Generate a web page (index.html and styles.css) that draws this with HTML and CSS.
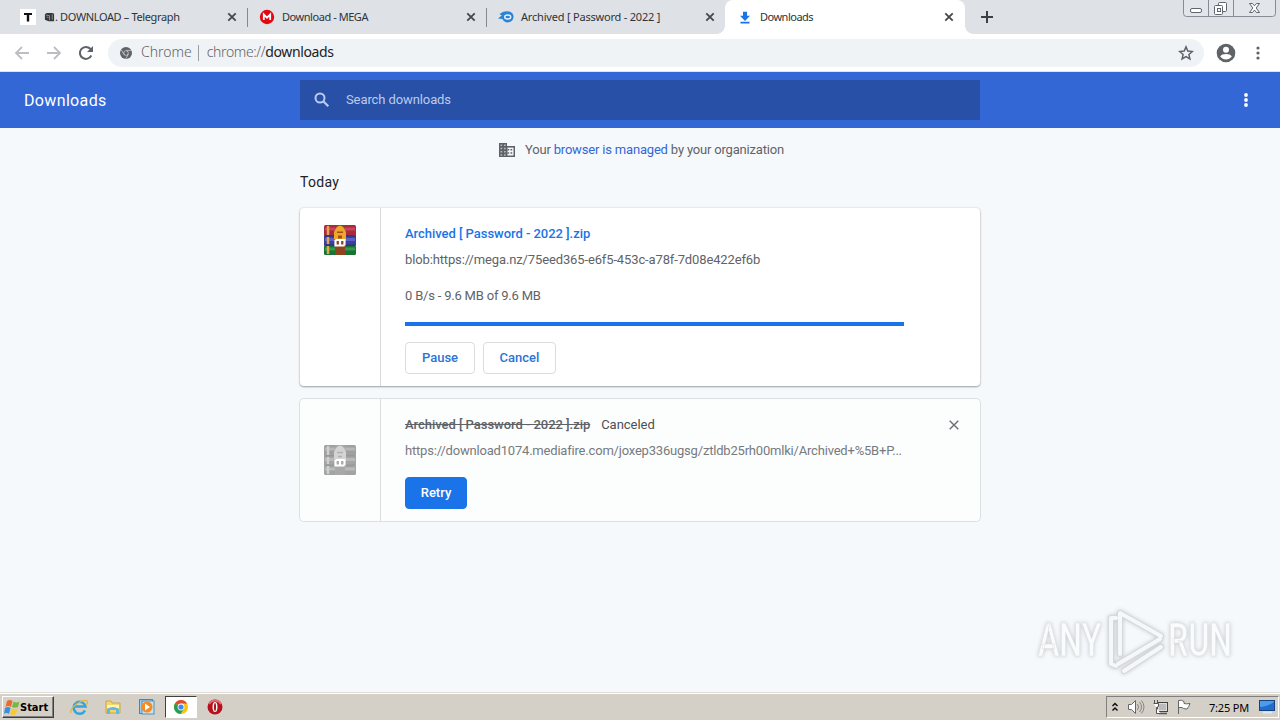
FILE: index.html
```html
<!DOCTYPE html>
<html lang="en">
<head>
    <meta charset="UTF-8">
    <title>Downloads</title>
    <link rel="stylesheet" href="styles.css">
</head>
<body>

    <div class="tabs">
        <div class="tab">
            <svg class="favicon" viewBox="0 0 16 16"><rect width="16" height="16" fill="#fff"/><path d="M4 4h8v2H9.200v6.500H6.800V6H4z" fill="#111"/></svg>
            <svg class="book" viewBox="0 0 12 10"><path d="M1 2l2-1.500h6l2 1V9.500H5L1 8z" fill="#33363a"/><path d="M2 3l4 .5v5M3 5l2 .500M9 2v6" fill="none" stroke="#aaa" stroke-width=".8"/></svg>
            <span class="tab-title t1">. DOWNLOAD – Telegraph</span>
            <svg class="close" viewBox="0 0 10 10"><path d="M1.300 1.300l7.400 7.400M8.700 1.300l-7.400 7.400"/></svg>
        </div>
        <div class="tab line">
            <svg class="favicon" viewBox="0 0 16 16"><circle cx="8" cy="8" r="7.200" fill="#e30613"/><path d="M4.800 11V5.500L8 8.700l3.200-3.200V11" fill="none" stroke="#fff" stroke-width="1.800"/></svg>
            <span class="tab-title t2">Download - MEGA</span>
            <svg class="close" viewBox="0 0 10 10"><path d="M1.300 1.300l7.400 7.400M8.700 1.300l-7.400 7.400"/></svg>
        </div>
        <div class="tab line">
            <svg class="favicon" viewBox="0 0 16 16"><path d="M0 9.500C2 8 2.500 7 4 6.500L1.500 5.300C5 1.500 11 1.300 14 4c3 3 1.500 8.500-3 9.300-3 .5-5.500-.8-6.500-3.300z" fill="#2b83d6"/><ellipse cx="9.700" cy="8" rx="3" ry="2" fill="none" stroke="#e8f3ff" stroke-width="1.400"/></svg>
            <span class="tab-title t3">Archived [ Password - 2022 ]</span>
            <svg class="close" viewBox="0 0 10 10"><path d="M1.300 1.300l7.400 7.400M8.700 1.300l-7.400 7.400"/></svg>
        </div>
        <div class="tab active">
            <svg class="favicon" viewBox="0 0 16 16"><path d="M6 2.800h4v4h3L8 12 3 6.800h3zM3.500 12.800h9v1.600h-9z" fill="#1a73e8"/></svg>
            <span class="tab-title t4">Downloads</span>
            <svg class="close" viewBox="0 0 10 10"><path d="M1.300 1.300l7.400 7.400M8.700 1.300l-7.400 7.400"/></svg>
        </div>
        <svg class="new-tab" viewBox="0 0 14 14"><path d="M7 1v12M1 7h12" stroke="#3c4043" stroke-width="2"/></svg>
        <svg class="window-buttons" viewBox="0 0 94 17">
            <path d="M.5 0v13.500q0 3 3 3h86q3 0 3-3V0M25.500 0v16.500M50.500 0v16.500" fill="#e2e5ea" stroke="#868b96"/>
            <g fill="#fff" stroke="#5f646d">
                <rect x="7.500" y="8.500" width="11" height="4" rx="1.500"/>
                <rect x="35.500" y="2.500" width="8" height="9" rx="1"/>
                <rect x="31.500" y="5.500" width="8" height="9" rx="1"/>
                <rect x="34.500" y="8.500" width="3" height="3"/>
                <path d="M66.500 3.500h3l2 2.300 2-2.300h3L73.200 8l3.300 4.500h-3l-2-2.400-2 2.400h-3L69.800 8z"/>
            </g>
        </svg>
    </div>

    <div class="toolbar">
        <svg class="nav" viewBox="0 0 16 16"><path d="M15 8H2M8 2L2 8l6 6" stroke="#bcbec1"/></svg>
        <svg class="nav" viewBox="0 0 16 16"><path d="M1 8h13M8 2l6 6-6 6" stroke="#bcbec1"/></svg>
        <svg class="nav" viewBox="0 0 16 16"><path d="M13.300 10.500A6 6 0 1 1 12.300 3.800L14 5.500" stroke="#5f6368" stroke-width="2"/><path d="M15 1v6H9z" fill="#5f6368"/></svg>
        <div class="address">
            <svg class="chrome-mark" viewBox="0 0 12 12"><circle cx="6" cy="6" r="6" fill="#5f6368"/><path d="M6 3.400h5.400M3.800 7.300L1.200 2.700M8.300 7.300l-2.700 4.600" stroke="#f1f3f4" stroke-width=".6"/><circle cx="6" cy="6" r="2.600" fill="#d4d6d8"/><circle cx="6" cy="6" r="1.900" fill="#5f6368"/></svg>
            <span class="scheme">Chrome</span>
            <span class="bar"></span>
            <span class="url">chrome://<b>downloads</b></span>
            <svg class="star" viewBox="0 0 16 16"><path d="M8 1.900l1.800 4.200 4.500.4-3.400 3 1 4.400L8 11.600l-3.900 2.300 1-4.400-3.400-3 4.500-.4z" fill="none" stroke="#5f6368" stroke-width="1.500"/></svg>
        </div>
        <svg class="profile" viewBox="0 0 20 20"><circle cx="10" cy="10" r="9.300" fill="#5f6368"/><circle cx="10" cy="6.800" r="3" fill="#fff"/><path d="M4.200 13.500c1.300-3.300 10.300-3.300 11.600 0-3 4-8.600 4-11.600 0z" fill="#fff"/></svg>
        <svg class="dots" viewBox="0 0 4 16"><g fill="#5f6368"><circle cx="2" cy="3" r="1.600"/><circle cx="2" cy="8" r="1.600"/><circle cx="2" cy="13" r="1.600"/></g></svg>
    </div>

    <div class="header">
        <h1>Downloads</h1>
        <div class="search">
            <svg viewBox="0 0 16 16"><circle cx="6" cy="6" r="4.500" fill="none" stroke="#bccbed" stroke-width="2"/><path d="M9.300 9.300l5 5" stroke="#bccbed" stroke-width="2.200"/></svg>
            <span>Search downloads</span>
        </div>
        <svg class="dots" viewBox="0 0 4 16"><g fill="#fff"><circle cx="2" cy="3" r="1.900"/><circle cx="2" cy="8" r="1.900"/><circle cx="2" cy="13" r="1.900"/></g></svg>
    </div>

    <div class="main">
        <div class="managed">
            <svg viewBox="0 0 18 16"><path d="M1 1h8v3h8v11H1z" fill="#5f6368"/><path d="M2.500 2.500h1.700v1.500H2.500zM6 2.500h1.700v1.500H6zM2.500 5.800h1.700v1.500H2.500zM6 5.800h1.700v1.500H6zM2.500 9h1.700v1.500H2.500zM6 9h1.700v1.500H6zM2.500 12.200h1.700v1.500H2.500zM6 12.200h1.700v1.500H6z" fill="#b5b9bd"/><path d="M9.500 5.600h6v7.900h-6z" fill="#f6f9fc"/><path d="M9.500 7h1.700v1.500H9.500zM9.500 10.300h1.700v1.500H9.500zM12.500 7h1.700v1.500h-1.700zM12.500 10.300h1.700v1.500h-1.700z" fill="#5f6368"/></svg>
            <span>Your <a>browser is managed</a> by your organization</span>
        </div>
        <h2>Today</h2>

        <div class="card">
            <div class="file-icon">
                <svg viewBox="0 0 32 30">
                    <rect width="32" height="11" rx="1.500" fill="#a82a3f"/><path d="M1 4h30" stroke="#cf4257" stroke-width="3"/>
                    <rect y="11" width="32" height="9" fill="#3a40a2"/><path d="M1 14.500h30" stroke="#5a62c4" stroke-width="3"/>
                    <rect y="20" width="32" height="10" rx="1.500" fill="#1a7234"/><path d="M1 24h30" stroke="#35994b" stroke-width="3"/>
                    <path d="M0 10.800h32M0 20.200h32" stroke="#3b2338" stroke-width=".8"/>
                    <path d="M4 1v9M4 12v7M4 21v8" stroke="#e0a850" stroke-width="2.500"/>
                    <path d="M11 0h10v30H11z" fill="#8f4421"/>
                    <path d="M12 3q4-5 8 0l2 4v7q-6 4-12 0V7z" fill="#eda72c"/><path d="M13 6.500h6v1.500h-6zM14 10.500h4v3h-4z" fill="#a64b18"/>
                    <path d="M11.500 15h9v5.500M11.500 15v5.500h9M16 15v5" fill="none" stroke="#fff" stroke-width="2.200"/>
                </svg>
            </div>
            <div class="details">
                <div class="name link">Archived [ Password - 2022 ].zip</div>
                <div class="source blob">blob:https://mega.nz/75eed365-e6f5-453c-a78f-7d08e422ef6b</div>
                <div class="status">0 B/s - 9.6 MB of 9.6 MB</div>
                <div class="progress"></div>
                <div class="buttons">
                    <span class="button pause">Pause</span>
                    <span class="button cancel">Cancel</span>
                </div>
            </div>
        </div>

        <div class="card canceled">
            <div class="file-icon">
                <svg viewBox="0 0 32 30">
                    <rect width="32" height="11" rx="1.500" fill="#a0a0a0"/><path d="M1 4h30" stroke="#b7b7b7" stroke-width="3"/>
                    <rect y="11" width="32" height="9" fill="#a5a5a5"/><path d="M1 14.500h30" stroke="#b9b9b9" stroke-width="3"/>
                    <rect y="20" width="32" height="10" rx="1.500" fill="#a3a3a3"/><path d="M1 24h30" stroke="#bababa" stroke-width="3"/>
                    <path d="M0 10.800h32M0 20.200h32" stroke="#919191" stroke-width=".8"/>
                    <path d="M4 1v9M4 12v7M4 21v8" stroke="#cfcfcf" stroke-width="2.500"/>
                    <path d="M11 0h10v30H11z" fill="#a8a8a8"/>
                    <path d="M12 3q4-5 8 0l2 4v7q-6 4-12 0V7z" fill="#d4d4d4"/><path d="M13 7.500h6M14 11.500h4" stroke="#b0b0b0" stroke-width="1.500"/>
                    <path d="M11.500 15h9v5.500M11.500 15v5.500h9M16 15v5" fill="none" stroke="#fff" stroke-width="2.200"/>
                </svg>
            </div>
            <div class="details">
                <div class="name"><s>Archived [ Password - 2022 ].zip</s><span class="tag">Canceled</span></div>
                <div class="source media">https://download1074.mediafire.com/joxep336ugsg/ztldb25rh00mlki/Archived+%5B+P...</div>
                <div class="buttons">
                    <span class="button retry">Retry</span>
                </div>
            </div>
            <svg class="remove" viewBox="0 0 10 10"><path d="M.7.7l8.600 8.600M9.300.7L.7 9.300" stroke="#6b6e72" stroke-width="1.400"/></svg>
        </div>
    </div>

    <svg class="watermark" viewBox="0 0 200 70">
        <g fill="#fafbfc" stroke="#dfe1e3" stroke-width=".6">
            <text transform="translate(2 50) scale(.7 1)">ANY</text>
            <text transform="translate(132 50) scale(.7 1)">RUN</text>
        </g>
        <g fill="none" stroke-linejoin="round" stroke-linecap="round">
            <path d="M80 12h-5v46l5 2M84 48V7l41 23M82 58l42-25M88 65l37-24" stroke="#d5d8db" stroke-width="6"/>
            <path d="M80 12h-5v46l5 2M84 48V7l41 23M82 58l42-25M88 65l37-24" stroke="#f6f7f8" stroke-width="4"/>
        </g>
    </svg>

    <div class="taskbar">
        <div class="start">
            <svg viewBox="0 0 16 16"><path d="M3 2q3-2 5.500 0L7 8Q4 6 1.500 8z" fill="#ed6a2d"/><path d="M9.500 2.500q3 2 6 0L14 8Q10.500 9.500 8 8z" fill="#75b843"/><path d="M1 9q3-2 5.500 0L5 15q-3-2-5 0z" fill="#3c8fdb"/><path d="M7.500 9.500q3 1.500 6 0L12 15q-3 2-6 0z" fill="#f9c932"/></svg>
            <span>Start</span>
        </div>
        <div class="launch">
            <svg viewBox="0 0 18 18"><path d="M15 12.500A6 6 0 1 1 15.500 8.500H5" fill="none" stroke="#32a5df" stroke-width="2.600"/><path d="M1 15C-1 10 13 0 17 3c1 1 0 3-1 4" fill="none" stroke="#e3b63e" stroke-width="1.300"/></svg>
            <svg viewBox="0 0 18 18"><path d="M2 3h5l1 2h8v10H2z" fill="#f5d66e" stroke="#cda543"/><path d="M3 7h12v3H3z" fill="#fff5b8"/><path d="M3 16V11q6-4 12 0v5h-3v-4H6v4z" fill="#5ebae0"/></svg>
            <svg viewBox="0 0 18 18"><rect x="1.500" y="1.500" width="13" height="14" fill="#9cccf0" stroke="#4289b9"/><rect x="4" y="3" width="12" height="13" fill="#c8e3f6" stroke="#528fb5"/><circle cx="9" cy="9" r="5.500" fill="#f68b1f"/><path d="M7 5.500l5 3.500-5 3.500z" fill="#fff"/></svg>
            <div class="running"><svg viewBox="0 0 18 18"><circle cx="9" cy="9" r="7" fill="#fbc116"/><path d="M9 9L2.900 5.500A7 7 0 0 1 15.100 5.500H9z" fill="#df4935"/><path d="M2.900 5.500A7 7 0 0 0 8.500 16L12 10.700 9 9z" fill="#249d57"/><circle cx="9" cy="9" r="3.400" fill="#fff"/><circle cx="9" cy="9" r="2.600" fill="#4285f4"/></svg></div>
            <svg viewBox="0 0 18 18"><circle cx="9" cy="9" r="7.500" fill="#b80f1c"/><path d="M3 6a7 7 0 0 1 12 0" fill="none" stroke="#e36b6f" stroke-width="2"/><ellipse cx="9" cy="9" rx="2.500" ry="5" fill="#f8f8f8"/><ellipse cx="9" cy="9" rx="1" ry="4" fill="#a5101a"/></svg>
        </div>
        <div class="tray">
            <svg class="chevrons" viewBox="0 0 8 10"><path d="M1.500 4L4 1.500 6.500 4M1.500 8.500L4 6l2.500 2.500" fill="none" stroke="#111" stroke-width="1.500"/></svg>
            <svg class="sound" viewBox="0 0 18 16"><path d="M1.500 5.500h3l4-4v13l-4-4h-3z" fill="#fff" stroke="#67676a"/><path d="M10.500 5q2 3 0 6M12.500 3q4 5 0 10M14.500 1.500q5 6.500 0 13" fill="none" stroke="#858585"/></svg>
            <svg class="network" viewBox="0 0 18 16"><rect x="5.500" y="3.500" width="10" height="9" fill="#ddd" stroke="#444"/><rect x="7" y="5" width="7" height="6" fill="#bbb"/><path d="M7 14.500h8" stroke="#555" stroke-width="1.500"/><path d="M2.500 1v3M5.500 1v3M1.500 4.500h5v3l-2 1v6h4" fill="#fff" stroke="#555"/></svg>
            <svg class="flag" viewBox="0 0 16 16"><path d="M2.500 15V1.500q3-1 5.500 1v2q2 .7 6 0-1 3-3 5.500-4 0-5-1.500H2.500" fill="#fff" stroke="#666"/></svg>
            <span class="clock">7:25 PM</span>
            <svg class="desktop" viewBox="0 0 16 14"><rect x=".5" y=".5" width="15" height="10" fill="#226bd0" stroke="#17427f"/><path d="M1 7q6 0 14-5V1H1z" fill="#4b9cea"/><path d="M4 12.500h9" stroke="#dbe9f7" stroke-width="2"/></svg>
        </div>
    </div>

</body>
</html>
```

FILE: styles.css
```css
* {
    box-sizing: border-box;
}

body {
    margin: 0;
    width: 1280px;
    height: 720px;
    overflow: hidden;
    display: flex;
    flex-direction: column;
    position: relative;
    background-color: #f6f9fc;
    font-family: Roboto, "Liberation Sans", sans-serif;
    font-size: 13px;
    color: #5f6368;
}

svg {
    display: block;
    flex: none;
}

span, h1, h2, .name, .source, .status {
    white-space: nowrap;
}

/* tab strip */
.tabs {
    height: 34px;
    flex: none;
    display: flex;
    padding-left: 8px;
    background-color: #dee1e6;
}

.tab {
    width: 239px;
    display: flex;
    align-items: center;
    padding: 0 10px 0 12px;
    position: relative;
    font-family: "Noto Sans", sans-serif;
    font-size: 11px;
    color: #303337;
}

.tab.line::before {
    content: "";
    position: absolute;
    left: 0;
    top: 8px;
    width: 1px;
    height: 19px;
    background-color: #858a92;
}

.tab.active {
    width: 240px;
    padding-right: 11px;
    background-color: #fff;
    border-radius: 8px 8px 0 0;
}

.tab.active::before,
.tab.active::after {
    content: "";
    position: absolute;
    bottom: 0;
    width: 8px;
    height: 8px;
}

.tab.active::before {
    left: -8px;
    background: radial-gradient(circle at 0 0, transparent 7.5px, #fff 8px);
}

.tab.active::after {
    right: -8px;
    background: radial-gradient(circle at 100% 0, transparent 7.5px, #fff 8px);
}

.tab-title {
    padding-bottom: 1px;
}

.t1 {
    letter-spacing: -.36px;
}

.t2 {
    letter-spacing: -.45px;
}

.t3 {
    letter-spacing: -.2px;
}

.t4 {
    letter-spacing: -.5px;
}

.favicon {
    width: 16px;
    height: 16px;
    margin-right: 7px;
}

.book {
    width: 11px;
    height: 10px;
    margin-left: 1px;
}

.close {
    width: 10px;
    height: 10px;
    margin-left: auto;
    fill: none;
    stroke: #44474c;
    stroke-width: 1.8;
}

.new-tab {
    width: 14px;
    height: 14px;
    margin: 10px 0 0 15px;
}

.window-buttons {
    width: 94px;
    height: 17px;
    margin: 0 3px 0 auto;
}

/* toolbar */
.toolbar {
    height: 38px;
    flex: none;
    display: flex;
    align-items: center;
    padding-left: 14px;
    background-color: #fff;
    border-bottom: 1px solid #dfe2e6;
}

.nav {
    width: 16px;
    height: 16px;
    margin-right: 16px;
    fill: none;
    stroke-width: 1.8;
}

.address {
    width: 1096px;
    height: 28px;
    margin-left: -2px;
    display: flex;
    align-items: center;
    padding: 0 10px 0 12px;
    border-radius: 14px;
    background-color: #f0f3f5;
    font-family: "Noto Sans", sans-serif;
    font-size: 14px;
    font-weight: 300;
}

.address span {
    position: relative;
    top: -1px;
}

.chrome-mark {
    width: 12px;
    height: 12px;
    margin-right: 9px;
}

.address .bar {
    width: 1px;
    height: 16px;
    margin: 0 8px 0 6px;
    top: 0;
    background-color: #9a9da1;
}

.url {
    letter-spacing: -.38px;
}

.url b {
    font-weight: 400;
    color: #202124;
}

.star {
    width: 16px;
    height: 16px;
    margin-left: auto;
}

.profile {
    width: 20px;
    height: 20px;
    margin-left: 12px;
}

.dots {
    width: 4px;
    height: 16px;
}

.toolbar .dots {
    margin-left: 20px;
}

/* page header */
.header {
    height: 56px;
    flex: none;
    display: grid;
    grid-template-columns: 276px 680px 1fr;
    align-items: center;
    padding: 0 32px 0 24px;
    background-color: #3367d6;
    color: #fff;
}

.header h1 {
    margin: 1px 0 0;
    font-size: 16px;
    font-weight: 400;
    letter-spacing: .35px;
}

.search {
    height: 40px;
    display: flex;
    align-items: center;
    padding-left: 14px;
    background-color: #2850a7;
    color: #bccbed;
    letter-spacing: -.1px;
}

.search svg {
    width: 16px;
    height: 16px;
    margin-right: 16px;
}

.search span {
    padding-bottom: 1px;
}

.header .dots {
    justify-self: end;
}

/* downloads */
.main {
    width: 680px;
    flex: 1;
    margin: 0 auto;
}

.managed {
    height: 44px;
    display: flex;
    align-items: center;
    justify-content: center;
    padding-left: 2px;
    letter-spacing: -.18px;
}

.managed svg {
    width: 18px;
    height: 16px;
    margin-right: 9px;
}

.managed span {
    padding-bottom: 2px;
}

.managed a {
    color: #3367d6;
}

h2 {
    height: 20px;
    margin: 0 0 16px;
    font-size: 14px;
    font-weight: 400;
    line-height: 21px;
    letter-spacing: .3px;
    color: #202124;
}

.card {
    height: 178px;
    display: flex;
    position: relative;
    margin-bottom: 13px;
    border-radius: 4px;
    background-color: #fff;
    box-shadow: 0 1px 2px rgba(60, 64, 67, .45), 0 0 2px rgba(60, 64, 67, .2);
}

.card.canceled {
    height: 122px;
    background-color: #fcfefe;
    box-shadow: 0 0 0 1px #dce0e2;
}

.file-icon {
    width: 81px;
    padding: 17px 0 0 24px;
    border-right: 1px solid #d9dcdf;
}

.canceled .file-icon {
    padding-top: 46px;
}

.file-icon svg {
    width: 32px;
    height: 30px;
}

.details {
    padding: 17px 0 0 24px;
}

.name {
    height: 18px;
    line-height: 18px;
    font-weight: 500;
    letter-spacing: -.04px;
}

.link {
    color: #1a73e8;
}

.tag {
    margin-left: 11px;
    font-weight: 400;
    color: #4c4f53;
}

.source {
    margin-top: 8px;
    height: 18px;
    line-height: 18px;
}

.blob {
    letter-spacing: -.13px;
}

.media {
    letter-spacing: -.195px;
    color: #777a7e;
}

.status {
    margin-top: 18px;
    height: 18px;
    line-height: 18px;
    letter-spacing: -.2px;
}

.progress {
    width: 499px;
    height: 4px;
    margin: 17px 0 16px;
    background-color: #1a73e8;
}

.buttons {
    display: flex;
    gap: 8px;
}

.canceled .buttons {
    margin-top: 17px;
}

.button {
    height: 32px;
    line-height: 30px;
    text-align: center;
    border: 1px solid #dadce0;
    border-radius: 4px;
    font-weight: 500;
    color: #2c73d6;
}

.pause {
    width: 70px;
}

.cancel {
    width: 73px;
}

.retry {
    width: 62px;
    border-color: #1a73e8;
    background-color: #1a73e8;
    color: #fff;
}

.remove {
    position: absolute;
    right: 21px;
    top: 21px;
    width: 10px;
    height: 10px;
}

.watermark {
    position: absolute;
    left: 1036px;
    top: 606px;
    width: 200px;
    height: 70px;
    font-family: Roboto, sans-serif;
    font-size: 46px;
    font-weight: 500;
    filter: drop-shadow(0 0 2px rgba(120, 125, 130, .4));
}

/* taskbar */
.taskbar {
    height: 28px;
    flex: none;
    display: flex;
    align-items: center;
    padding: 1px 1px 0 2px;
    border-top: 1px solid #dedbd5;
    background-color: #d4d0c8;
    box-shadow: inset 0 1px #fff;
    color: #000;
}

.start {
    width: 52px;
    height: 22px;
    display: flex;
    align-items: center;
    padding-left: 1px;
    border: 1px solid;
    border-color: #fff #404040 #404040 #fff;
    box-shadow: inset -1px -1px #808080;
    font-family: "DejaVu Sans Condensed", "DejaVu Sans", sans-serif;
    font-size: 11px;
    font-weight: bold;
}

.start svg {
    width: 16px;
    height: 16px;
}

.launch {
    display: flex;
    align-items: center;
    margin-left: 16px;
    gap: 16px;
}

.launch svg {
    width: 18px;
    height: 18px;
}

.running {
    width: 32px;
    height: 22px;
    display: flex;
    align-items: center;
    justify-content: center;
    margin: 0 -7px;
    border: 1px solid;
    border-color: #404040 #fff #fff #404040;
    background-color: #fff;
}

.tray {
    width: 173px;
    height: 22px;
    display: flex;
    align-items: center;
    margin-left: auto;
    padding-left: 4px;
    border: 1px solid;
    border-color: #808080 #fff #fff #808080;
    font-family: "Noto Sans", sans-serif;
    font-size: 11px;
}

.chevrons {
    width: 8px;
    height: 10px;
}

.sound {
    width: 18px;
    height: 16px;
    margin-left: 8px;
}

.network {
    width: 18px;
    height: 16px;
    margin-left: 7px;
}

.flag {
    width: 16px;
    height: 16px;
    margin-left: 6px;
}

.clock {
    margin-left: 17px;
    letter-spacing: -.2px;
}

.desktop {
    width: 16px;
    height: 14px;
    margin: 0 3px 0 auto;
}
```
